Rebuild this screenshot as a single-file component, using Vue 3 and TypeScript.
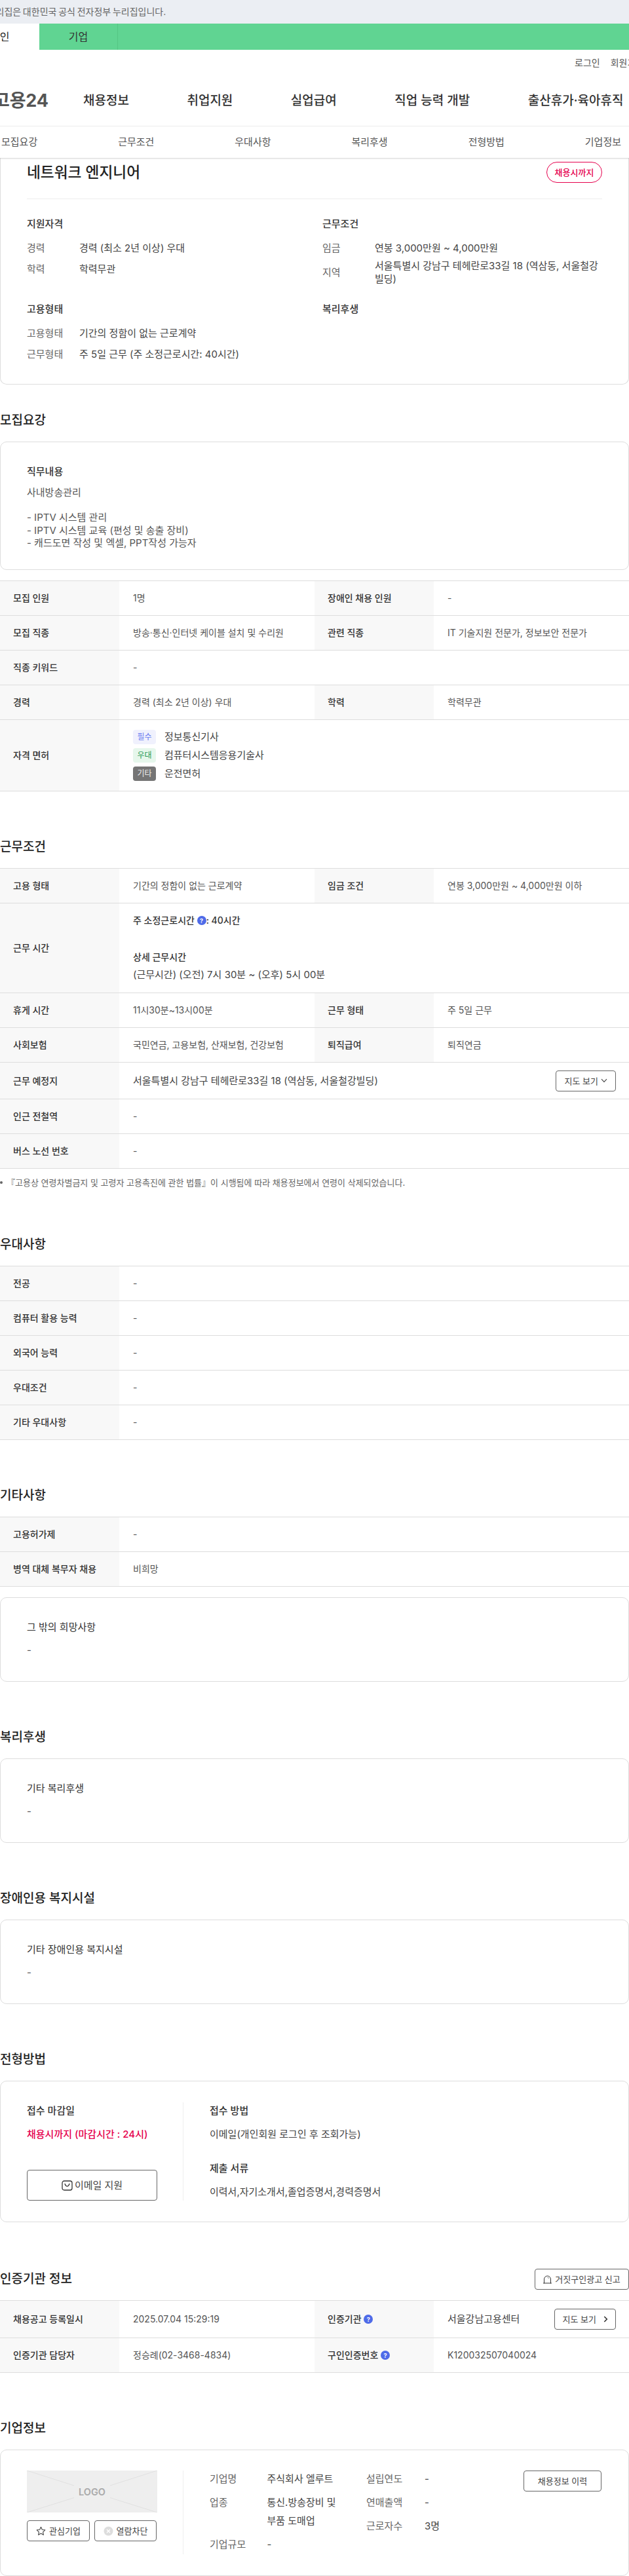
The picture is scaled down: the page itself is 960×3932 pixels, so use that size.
<script setup lang="ts">
interface Cell { label: string; value: string }
interface Row { cells: Cell[] }

const navItems: string[] = ['채용정보', '취업지원', '실업급여', '직업 능력 개발', '출산휴가·육아휴직']
const subNav: string[] = ['모집요강', '근무조건', '우대사항', '복리후생', '전형방법', '기업정보']

const recruitRows: Row[] = [
  { cells: [{ label: '모집 인원', value: '1명' }, { label: '장애인 채용 인원', value: '-' }] },
  { cells: [{ label: '모집 직종', value: '방송·통신·인터넷 케이블 설치 및 수리원' }, { label: '관련 직종', value: 'IT 기술지원 전문가, 정보보안 전문가' }] },
  { cells: [{ label: '직종 키워드', value: '-' }] },
  { cells: [{ label: '경력', value: '경력 (최소 2년 이상) 우대' }, { label: '학력', value: '학력무관' }] }
]
const licenses = [
  { kind: 'req', tag: '필수', name: '정보통신기사' },
  { kind: 'pref', tag: '우대', name: '컴퓨터시스템응용기술사' },
  { kind: 'etc', tag: '기타', name: '운전면허' }
]
const workRowsB: Row[] = [
  { cells: [{ label: '휴게 시간', value: '11시30분~13시00분' }, { label: '근무 형태', value: '주 5일 근무' }] },
  { cells: [{ label: '사회보험', value: '국민연금, 고용보험, 산재보험, 건강보험' }, { label: '퇴직급여', value: '퇴직연금' }] }
]
const workRowsC: Row[] = [
  { cells: [{ label: '인근 전철역', value: '-' }] },
  { cells: [{ label: '버스 노선 번호', value: '-' }] }
]
const prefRows: Row[] = ['전공', '컴퓨터 활용 능력', '외국어 능력', '우대조건', '기타 우대사항'].map(
  (label) => ({ cells: [{ label, value: '-' }] })
)
const etcRows: Row[] = [
  { cells: [{ label: '고용허가제', value: '-' }] },
  { cells: [{ label: '병역 대체 복무자 채용', value: '비희망' }] }
]
const jobText = `사내방송관리

- IPTV 시스템 관리
- IPTV 시스템 교육 (편성 및 송출 장비)
- 캐드도면 작성 및 엑셀, PPT작성 가능자`
</script>

<template>
  <div class="page">
    <header class="top">
      <div class="banner"><span class="banner-text">이 누리집은 대한민국 공식 전자정부 누리집입니다.</span></div>
      <div class="tabs">
        <div class="tab tab-on"><span>개인</span></div>
        <div class="tab tab-off">기업</div>
      </div>
      <div class="util"><span>로그인</span><span>회원가입</span></div>
      <nav class="nav">
        <span class="brand">고용24</span>
        <div class="nav-list"><span v-for="n in navItems" :key="n">{{ n }}</span></div>
      </nav>
      <div class="subnav"><span v-for="s in subNav" :key="s">{{ s }}</span></div>
    </header>

    <main>
      <section class="card summary">
        <div class="summary-head">
          <h1>네트워크 엔지니어</h1>
          <span class="pill">채용시까지</span>
        </div>
        <div class="summary-grid">
          <div class="group">
            <h3>지원자격</h3>
            <dl class="kv">
              <dt>경력</dt><dd>경력 (최소 2년 이상) 우대</dd>
              <dt>학력</dt><dd>학력무관</dd>
            </dl>
          </div>
          <div class="group">
            <h3>근무조건</h3>
            <dl class="kv kv-tight">
              <dt>임금</dt><dd>연봉 3,000만원 ~ 4,000만원</dd>
              <dt>지역</dt><dd class="wrap">서울특별시 강남구 테헤란로33길 18 (역삼동, 서울철강빌딩)</dd>
            </dl>
          </div>
          <div class="group">
            <h3>고용형태</h3>
            <dl class="kv">
              <dt>고용형태</dt><dd>기간의 정함이 없는 근로계약</dd>
              <dt>근무형태</dt><dd>주 5일 근무 (주 소정근로시간: 40시간)</dd>
            </dl>
          </div>
          <div class="group"><h3>복리후생</h3></div>
        </div>
      </section>

      <section class="sec sec-first">
        <h2>모집요강</h2>
        <div class="card box box-pre">
          <h4>직무내용</h4>
          <p class="pre">{{ jobText }}</p>
        </div>
        <div class="table table-gap">
          <div v-for="(r, i) in recruitRows" :key="i" class="row">
            <template v-for="c in r.cells" :key="c.label">
              <div class="th">{{ c.label }}</div>
              <div class="td" :class="{ span: r.cells.length === 1 }">{{ c.value }}</div>
            </template>
          </div>
          <div class="row row-lic">
            <div class="th">자격 면허</div>
            <div class="td span lic">
              <div v-for="l in licenses" :key="l.name" class="lic-row">
                <span class="badge" :class="'badge-' + l.kind">{{ l.tag }}</span>
                <span class="lic-name">{{ l.name }}</span>
              </div>
            </div>
          </div>
        </div>
      </section>

      <section class="sec">
        <h2>근무조건</h2>
        <div class="table">
          <div class="row">
            <div class="th">고용 형태</div><div class="td">기간의 정함이 없는 근로계약</div>
            <div class="th">임금 조건</div><div class="td">연봉 3,000만원 ~ 4,000만원 이하</div>
          </div>
          <div class="row row-hours">
            <div class="th">근무 시간</div>
            <div class="td span hours">
              <p class="h-strong">주 소정근로시간 <span class="help"><i>?</i></span>: 40시간</p>
              <p class="h-strong h-gap">상세 근무시간</p>
              <p class="h-text">(근무시간) (오전) 7시 30분 ~ (오후) 5시 00분</p>
            </div>
          </div>
          <div v-for="(r, i) in workRowsB" :key="i" class="row">
            <template v-for="c in r.cells" :key="c.label">
              <div class="th">{{ c.label }}</div>
              <div class="td">{{ c.value }}</div>
            </template>
          </div>
          <div class="row row-place">
            <div class="th">근무 예정지</div>
            <div class="td span td-map">
              <span class="addr">서울특별시 강남구 테헤란로33길 18 (역삼동, 서울철강빌딩)</span>
              <button class="btn btn-map" type="button">지도 보기 <svg width="10" height="7" viewBox="0 0 10 7" fill="none"><path d="M1 1.200 5 5.400l4-4.200" stroke="#444" stroke-width="1.100" /></svg></button>
            </div>
          </div>
          <div v-for="(r, i) in workRowsC" :key="i" class="row">
            <div class="th">{{ r.cells[0].label }}</div>
            <div class="td span">{{ r.cells[0].value }}</div>
          </div>
        </div>
        <p class="note"><span class="dot"></span>『고용상 연령차별금지 및 고령자 고용촉진에 관한 법률』이 시행됨에 따라 채용정보에서 연령이 삭제되었습니다.</p>
      </section>

      <section class="sec">
        <h2>우대사항</h2>
        <div class="table">
          <div v-for="(r, i) in prefRows" :key="i" class="row">
            <div class="th">{{ r.cells[0].label }}</div>
            <div class="td span">{{ r.cells[0].value }}</div>
          </div>
        </div>
      </section>

      <section class="sec">
        <h2>기타사항</h2>
        <div class="table">
          <div v-for="(r, i) in etcRows" :key="i" class="row">
            <div class="th">{{ r.cells[0].label }}</div>
            <div class="td span">{{ r.cells[0].value }}</div>
          </div>
        </div>
        <div class="card box box-after">
          <h4 class="h4-reg">그 밖의 희망사항</h4>
          <p class="single">-</p>
        </div>
      </section>

      <section class="sec">
        <h2>복리후생</h2>
        <div class="card box">
          <h4 class="h4-reg">기타 복리후생</h4>
          <p class="single">-</p>
        </div>
      </section>

      <section class="sec">
        <h2>장애인용 복지시설</h2>
        <div class="card box">
          <h4 class="h4-reg">기타 장애인용 복지시설</h4>
          <p class="single">-</p>
        </div>
      </section>

      <section class="sec">
        <h2>전형방법</h2>
        <div class="card apply">
          <div class="apply-left">
            <h5>접수 마감일</h5>
            <p class="deadline">채용시까지 (마감시간 : 24시)</p>
            <button class="btn btn-apply" type="button">
              <svg width="17" height="17" viewBox="0 0 17 17" fill="none"><rect x="1" y="2" width="15" height="14" rx="3" stroke="#333" stroke-width="1.300" /><path d="M5 6.500c1 2.600 2.200 3.600 3.500 3.600S11 9.100 12 6.500" stroke="#333" stroke-width="1.300" stroke-linecap="round" /></svg>
              <span>이메일 지원</span>
            </button>
          </div>
          <div class="apply-right">
            <h5>접수 방법</h5>
            <p class="apply-val">이메일(개인회원 로그인 후 조회가능)</p>
            <h5 class="h5-gap">제출 서류</h5>
            <p class="apply-val">이력서,자기소개서,졸업증명서,경력증명서</p>
          </div>
        </div>
      </section>

      <section class="sec">
        <div class="head-row">
          <h2>인증기관 정보</h2>
          <button class="btn btn-report" type="button">
            <svg width="13" height="13" viewBox="0 0 13 13" fill="none"><path d="M1.500 12V6a5 5 0 0 1 10 0v6M.5 12h12M7.300 3.400l.8.9" stroke="#333" stroke-width="1" stroke-linecap="round" /></svg>
            <span>거짓구인광고 신고</span>
          </button>
        </div>
        <div class="table">
          <div class="row row-map">
            <div class="th">채용공고 등록일시</div><div class="td">2025.07.04 15:29:19</div>
            <div class="th">인증기관 <span class="help"><i>?</i></span></div>
            <div class="td td-map">
              <span class="agency">서울강남고용센터</span>
              <button class="btn btn-map2" type="button">지도 보기 <svg width="7" height="10" viewBox="0 0 7 10" fill="none"><path d="M1.300 1 5.300 5l-4 4" stroke="#333" stroke-width="1.600" /></svg></button>
            </div>
          </div>
          <div class="row">
            <div class="th">인증기관 담당자</div><div class="td">정승례(02-3468-4834)</div>
            <div class="th">구인인증번호 <span class="help"><i>?</i></span></div>
            <div class="td">K120032507040024</div>
          </div>
        </div>
      </section>

      <section class="sec">
        <h2>기업정보</h2>
        <div class="card company">
          <div class="co-left">
            <svg class="logo" width="199" height="64" viewBox="0 0 199 64">
              <rect width="199" height="64" fill="#eeeeee" />
              <path d="M0 0 72 23M127 23 199 0M0 64 72 41.500M127 41.500 199 64" stroke="#e0e0e0" stroke-width="1" />
              <text x="99.500" y="37.500" text-anchor="middle" class="logo-text">LOGO</text>
            </svg>
            <div class="co-btns">
              <button class="btn btn-co" type="button">
                <svg width="15" height="15" viewBox="0 0 15 15" fill="none"><path d="m7.500 1.200 1.900 4 4.400.6-3.200 3 .8 4.400-3.900-2.100-3.900 2.100.8-4.400-3.200-3 4.400-.6z" stroke="#444" stroke-width="1.100" stroke-linejoin="round" /></svg>
                <span>관심기업</span>
              </button>
              <button class="btn btn-co" type="button">
                <svg width="15" height="15" viewBox="0 0 15 15" fill="none"><circle cx="7.500" cy="7.500" r="7" fill="#dddddd" /><path d="m5 5 5 5m0-5-5 5" stroke="#fff" stroke-width="1.300" /></svg>
                <span>열람차단</span>
              </button>
            </div>
          </div>
          <div class="co-right">
            <dl class="co-col co-col-a">
              <dt>기업명</dt><dd>주식회사 엘루트</dd>
              <dt>업종</dt><dd>통신.방송장비 및 부품 도매업</dd>
              <dt>기업규모</dt><dd>-</dd>
            </dl>
            <dl class="co-col co-col-b">
              <dt>설립연도</dt><dd>-</dd>
              <dt>연매출액</dt><dd>-</dd>
              <dt>근로자수</dt><dd>3명</dd>
            </dl>
            <button class="btn btn-history" type="button">채용정보 이력</button>
          </div>
        </div>
      </section>
    </main>
  </div>
</template>

<style>
html, body { margin: 0; padding: 0; background: #fff; }
</style>

<style scoped>
.page {
  width: 960px;
  height: 3932px;
  overflow: hidden;
  font-family: Inter, "Noto Sans CJK KR", "Noto Sans", sans-serif;
  color: #444;
  font-size: 14px;
  line-height: 20px;
  background: #fff;
}
h1, h2, h3, h4, h5, p, dl, dd, dt { margin: 0; padding: 0; font: inherit; }
button { font: inherit; background: #fff; cursor: pointer; padding: 0; }

.top { position: relative; z-index: 2; background: #fff; box-shadow: 0 1px 2px rgba(0, 0, 0, 0.18); }
.banner { height: 36px; background: #ebeef3; overflow: hidden; white-space: nowrap; display: flex; align-items: center; color: #666; font-size: 14px; }
.banner-text { margin-left: -35px; word-spacing: -1.200px; }
.tabs { display: flex; height: 40px; background: #60d492; font-size: 16px; color: #333; }
.tab { display: flex; align-items: center; justify-content: center; }
.tab-on { width: 60px; background: #fff; justify-content: flex-start; overflow: hidden; color: #222; }
.tab-on span { margin-left: -15px; white-space: nowrap; }
.tab-off { width: 119px; border-right: 1px solid #55c584; }
.util { height: 40px; display: flex; align-items: center; gap: 16px; padding-left: 877px; font-size: 14px; color: #555; white-space: nowrap; overflow: hidden; }
.nav { height: 76px; display: flex; align-items: center; border-bottom: 1px solid #ececec; overflow: hidden; box-sizing: content-box; }
.brand { margin-left: -10px; width: 137px; flex: none; font-size: 27px; font-weight: 700; color: #555; white-space: nowrap; letter-spacing: -0.2px; }
.nav-list { display: flex; gap: 88.500px; font-size: 19px; font-weight: 500; color: #333; white-space: nowrap; }
.subnav { height: 48px; display: flex; align-items: center; justify-content: space-between; padding: 0 12px 0 2px; font-size: 15px; color: #555; }

.card { border: 1px solid #ddd; border-radius: 10px; background: #fff; box-sizing: border-box; }
.summary { height: 346px; border-top: none; border-top-left-radius: 0; border-top-right-radius: 0; padding: 6px 40px 0; }
.summary-head { display: flex; justify-content: space-between; height: 56px; border-bottom: 1px solid #eee; box-sizing: content-box; }
.summary-head h1 { font-size: 22.700px; line-height: 32px; font-weight: 500; color: #222; }
.pill { box-sizing: border-box; width: 85px; height: 32px; border: 1px solid #e6004d; border-radius: 16px; color: #e6004d; font-size: 13px; font-weight: 500; display: flex; align-items: center; justify-content: center; }
.summary-grid { display: grid; grid-template-columns: 451px 1fr; row-gap: 27px; padding-top: 28px; }
.group h3 { font-size: 15px; font-weight: 500; color: #333; margin-bottom: 17px; }
.kv { display: grid; grid-template-columns: 80px 1fr; row-gap: 12px; align-items: center; font-size: 15px; }
.kv-tight { row-gap: 7px; }
.kv dt { color: #666; }
.kv dd { color: #444; }
.kv .wrap { line-height: 19.500px; }

.sec { margin-top: 71px; }
.sec-first { margin-top: 41px; }
.sec h2 { font-size: 19px; line-height: 28px; font-weight: 500; color: #222; margin-bottom: 18px; white-space: nowrap; }
.box { padding: 35px 40px; }
.box h4 { font-size: 15px; font-weight: 500; color: #333; margin-bottom: 13px; }
.box .h4-reg { font-weight: 400; color: #333; }
.box-pre { padding-bottom: 31px; }
.box-pre h4 { margin-bottom: 12px; }
.pre { white-space: pre-wrap; font-size: 15px; line-height: 19.200px; color: #555; }
.single { font-size: 15px; line-height: 24px; color: #555; }
.box-after { margin-top: 16px; }

.table { border-top: 1px solid #ddd; }
.table-gap { margin-top: 16px; }
.row { display: grid; grid-template-columns: 182px 298px 182px 298px; height: 53px; border-bottom: 1px solid #ddd; box-sizing: border-box; }
.th { background: #f8f8f8; display: flex; align-items: center; padding-left: 20px; font-weight: 500; color: #333; white-space: pre; }
.td { display: flex; align-items: center; padding: 0 20px 0 21px; color: #555; white-space: nowrap; min-width: 0; }
.span { grid-column: span 3; }
.row-lic { height: 109px; }
.lic { flex-direction: column; align-items: flex-start; justify-content: center; gap: 6px; }
.lic-row { display: flex; align-items: center; gap: 13px; height: 22px; }
.lic-name { font-size: 15px; color: #444; }
.badge { width: 35px; height: 22px; border-radius: 4px; display: flex; align-items: center; justify-content: center; font-size: 12px; }
.badge-req { background: #f0f1fd; color: #6a7df0; }
.badge-pref { background: #e6f7ec; color: #2b9a57; }
.badge-etc { background: #757575; color: #eee; }
.row-hours { height: 137px; }
.hours { display: block; padding-top: 16px; font-size: 15px; }
.h-strong { font-size: 14px; font-weight: 500; color: #333; display: flex; align-items: center; white-space: pre; }
.h-gap { margin-top: 36px; }
.h-text { margin-top: 7px; color: #444; }
.help { display: inline-flex; width: 14px; height: 14px; border-radius: 50%; background: #4f6be8; color: #fff; align-items: center; justify-content: center; font-size: 9px; font-weight: 700; flex: none; }
.help i { font-style: normal; line-height: 1; }
.row-map { height: 57px; }
.row-place { height: 56px; }
.td-map { justify-content: space-between; }
.addr { font-size: 15px; color: #444; }
.agency { font-size: 15px; color: #444; }
.btn { box-sizing: border-box; border: 1px solid #666; border-radius: 4px; color: #444; display: inline-flex; align-items: center; justify-content: center; white-space: pre; }
.btn-map { width: 92px; height: 32px; font-size: 13px; }
.btn-map2 { width: 94px; height: 32px; font-size: 13px; gap: 7px; }
.note { margin: 11px 0 0; height: 20px; font-size: 13px; color: #666; display: flex; align-items: center; white-space: nowrap; }
.dot { width: 4px; height: 4px; border-radius: 50%; background: #666; margin-right: 6px; }

.apply { display: flex; padding: 32px 0; height: 216px; }
.apply-left { width: 279px; box-sizing: border-box; padding: 0 40px; border-right: 1px solid #eee; display: flex; flex-direction: column; }
.apply-right { padding-left: 40px; }
.apply h5 { font-size: 15px; line-height: 25px; font-weight: 500; color: #333; }
.deadline { margin-top: 13.500px; color: #e6004d; font-size: 15px; font-weight: 500; }
.apply-val { margin-top: 13.500px; font-size: 15px; color: #444; }
.h5-gap { margin-top: 29.500px; }
.btn-apply { margin-top: auto; height: 47px; width: 199px; font-size: 15px; gap: 3px; }

.head-row { display: flex; justify-content: space-between; align-items: center; height: 32px; margin-bottom: 16px; }
.head-row h2 { margin: 0; }
.btn-report { width: 144px; height: 32px; font-size: 13px; gap: 5px; }

.company { display: flex; padding: 31px 0 32px; height: 193px; }
.co-left { width: 279px; box-sizing: border-box; padding: 0 40px; border-right: 1px solid #eee; }
.logo { display: block; }
.logo-text { font-family: Inter, sans-serif; font-size: 14.500px; font-weight: 600; fill: #aaaaaa; }
.co-btns { display: flex; justify-content: space-between; margin-top: 12px; }
.btn-co { width: 96px; height: 32px; font-size: 13px; gap: 5px; }
.co-btns .btn-co + .btn-co { width: 95px; }
.co-right { flex: 1; display: flex; padding-left: 40px; font-size: 15px; }
.co-col { display: grid; row-gap: 8px; align-content: start; line-height: 28px; margin-top: -1px; }
.co-col dt { color: #666; }
.co-col dd { color: #444; word-break: keep-all; }
.co-col-a { width: 239px; grid-template-columns: 87.500px 135px; }
.co-col-b { width: 240px; grid-template-columns: 89px 1fr; }
.btn-history { width: 119px; height: 32px; font-size: 13px; flex: none; }
</style>
